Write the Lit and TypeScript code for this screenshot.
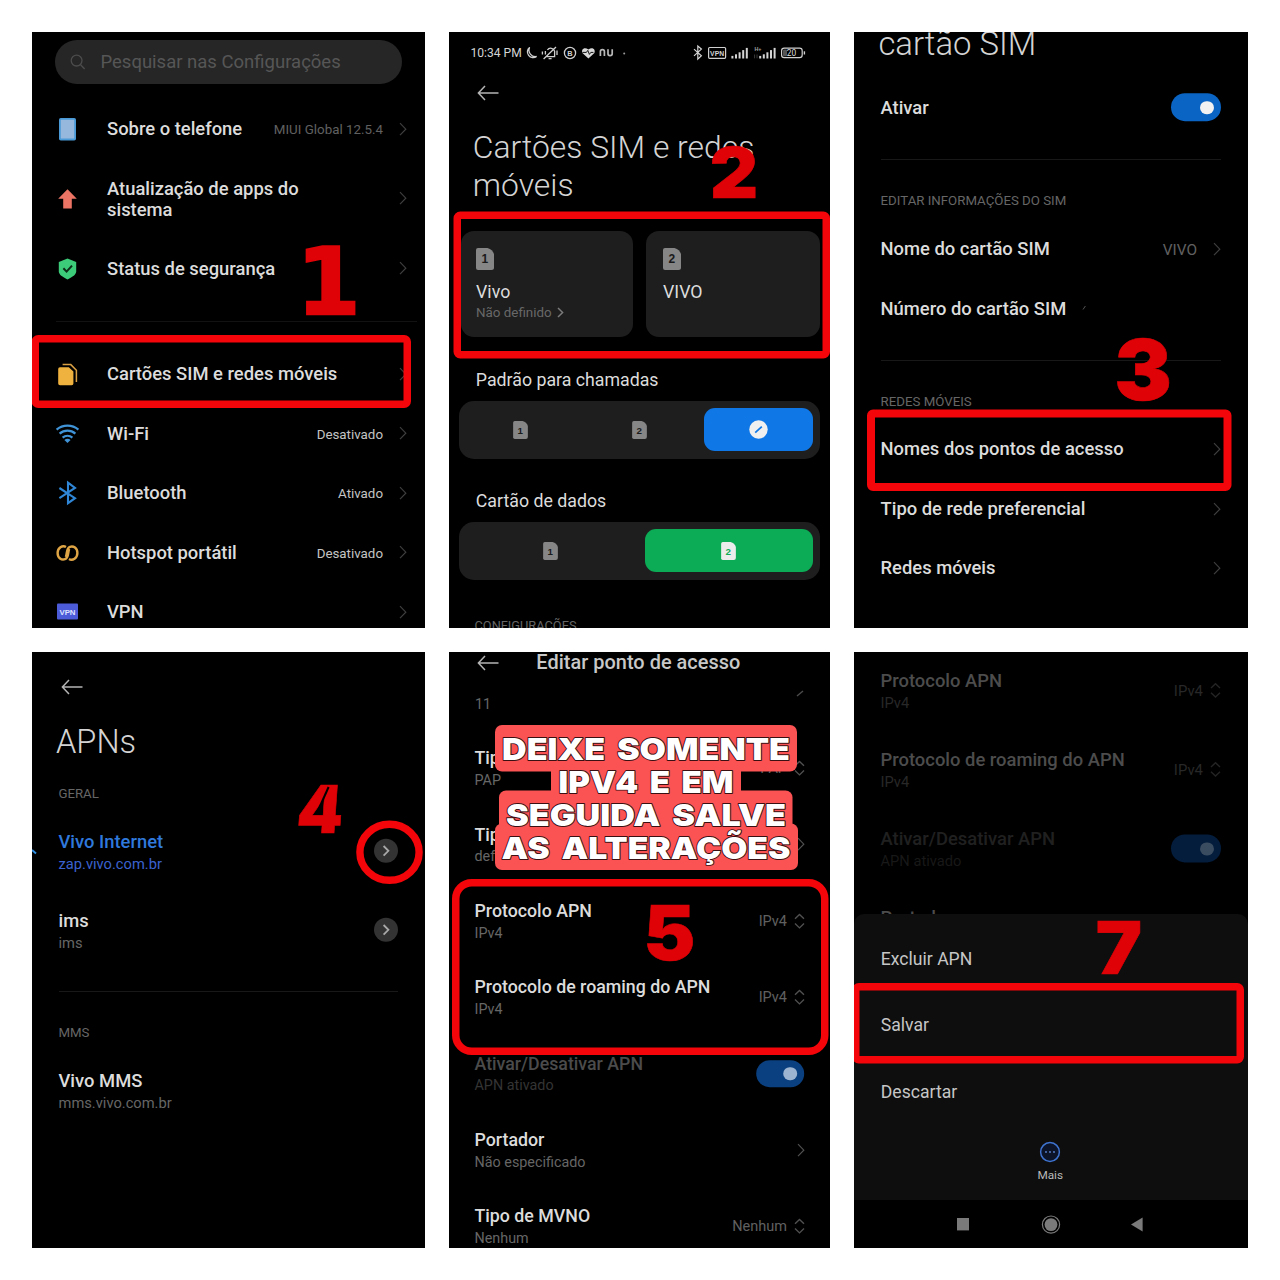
import { LitElement, html, css, svg, nothing } from "lit";
import { customElement, property } from "lit/decorators.js";
import { classMap } from "lit/directives/class-map.js";

const chevron = html`<svg class="chev" width="8" height="14" viewBox="0 0 8 14"><path d="M1 1l5.8 6L1 13" fill="none" stroke="currentColor" stroke-width="1.2"/></svg>`;
const updown = html`<svg class="chev" width="11" height="16" viewBox="0 0 11 16"><path d="M1 5.6l4.5-4.3L10 5.6M1 10.4l4.5 4.3 4.5-4.3" fill="none" stroke="currentColor" stroke-width="1.4"/></svg>`;
const back = html`<svg class="back" width="22" height="16" viewBox="0 0 22 16"><path d="M8 1L1.4 8 8 15M1.4 8H21.5" fill="none" stroke="#b4b4b4" stroke-width="1.5"/></svg>`;

const simCard = (n: number, w: number, h: number, fill: string, ink: string) => html`
  <svg width=${w} height=${h} viewBox="0 0 18 22">
    <path d="M2 0H11.5C15 1 17 3 18 6V19.5A2.5 2.5 0 0 1 15.5 22H2A2 2 0 0 1 0 20V2A2 2 0 0 1 2 0Z" fill=${fill}/>
    <text x="8.8" y="15.4" text-anchor="middle" font-family="Liberation Sans" font-weight="700" font-size="12" fill=${ink}>${n}</text>
  </svg>`;

const icons: Record<string, unknown> = {
  phone: html`<svg width="27" height="27" viewBox="0 0 27 27"><rect x="5" y="2" width="17" height="22.5" rx="1.8" fill="#4a9ad8"/><rect x="6.8" y="3.8" width="13.4" height="18.8" rx="0.6" fill="#96b8dc"/></svg>`,
  up: html`<svg width="27" height="27" viewBox="0 0 27 27"><path d="M13.5 3.2L22.8 12.8H17.8V22.6H9.2V12.8H4.2Z" fill="#ec7464"/></svg>`,
  shield: html`<svg width="27" height="27" viewBox="0 0 27 27"><path d="M13.5 2.4L22.2 6V15.2C22.2 18.6 18.6 20.8 13.5 23.4C8.4 20.8 4.8 18.6 4.8 15.2V6Z" fill="#3ccb78"/><path d="M9.4 12.2l3.2 3.4 5.4-6" fill="none" stroke="#0c2c18" stroke-width="2"/></svg>`,
  sims: html`<svg width="27" height="27" viewBox="0 0 27 27"><path d="M6 6.2H14.8L19.4 10.6V22.4A1.8 1.8 0 0 1 17.6 24.2H6A1.8 1.8 0 0 1 4.2 22.4V8A1.8 1.8 0 0 1 6 6.2Z" fill="#f0b23e"/><path d="M8.6 3.6H16.8L22.4 9.2V21" fill="none" stroke="#d9a043" stroke-width="1.5"/></svg>`,
  wifi: html`<svg width="27" height="27" viewBox="0 0 27 27"><g fill="none" stroke="#3f93d6" stroke-width="2.2"><path d="M2.6 8.6C8.8 3.2 18.2 3.2 24.4 8.6"/><path d="M5.6 12.7C10.2 8.7 16.8 8.7 21.4 12.7"/><path d="M8.6 16.6C11.4 14.1 15.6 14.1 18.4 16.6"/></g><path d="M10.4 18.9C12.2 17.4 14.8 17.4 16.6 18.9L13.5 22Z" fill="#3f93d6"/></svg>`,
  bt: html`<svg width="27" height="27" viewBox="0 0 27 27"><path d="M5.4 8L21 18.2L14 23.2V2.6L21 8L5.4 18.2" fill="none" stroke="#2f86d6" stroke-width="2.1"/></svg>`,
  hotspot: html`<svg width="27" height="27" viewBox="0 0 27 27"><g fill="none" stroke="#dfa545" stroke-width="2.4"><path d="M12 7C8.4 4.8 3.6 8 3.6 13C3.6 18 7.6 20.4 11 19.2C15 17.8 13.6 12.4 15.2 9"/><path d="M15 19C18.6 21.2 23.4 18 23.4 13C23.4 8 19.4 5.6 16 6.8C12 8.2 13.4 13.6 11.8 17"/></g></svg>`,
  vpn: html`<svg width="27" height="27" viewBox="0 0 27 27"><rect x="3" y="4.4" width="21" height="16.2" rx="1" fill="#4c5bd8"/><text x="13.5" y="15.6" text-anchor="middle" font-family="Liberation Sans" font-weight="700" font-size="7.8" fill="#dfe3ff">VPN</text></svg>`,
};

const RED = "#f40509";
const digit = (n: number, x: number, y: number, size: number, sx: number, family = "Inter", skew = 0, sw = 0.6) => svg`
  <text transform="translate(${x} ${y}) skewX(${skew}) scale(${sx} 1)" text-anchor="middle" font-family=${family}
    font-weight="900" font-size=${size} fill="#df0206" stroke="#df0206" stroke-width=${sw}>${n}</text>`;
const frame = (x: number, y: number, w: number, h: number, r = 3, sw = 7.5) => svg`
  <rect x=${x + sw / 2} y=${y + sw / 2} width=${w - sw} height=${h - sw} rx=${r} fill="none" stroke=${RED} stroke-width=${sw}/>`;
const overlay = (box: string, content: unknown) => html`<svg class="marks" viewBox=${box}>${content}</svg>`;
const caption = (t: string, x: number, y: number, w: number) => svg`
  <text x=${x} y=${y} textLength=${w} lengthAdjust="spacingAndGlyphs" font-family="Inter" font-weight="900" font-size="30.5" word-spacing="4.5"
    fill="#fff" stroke="#3a1012" stroke-width="1.8" paint-order="stroke" stroke-linejoin="round">${t}</text>`;

interface Item { title: string; sub?: string; value?: string; icon?: string; end?: "chev" | "updown" | "toggle" | "disc" | "none"; cls?: string; }

@customElement("settings-row")
export class SettingsRow extends LitElement {
  @property({ attribute: false }) item!: Item;
  static styles = css`
    :host { display: flex; align-items: center; box-sizing: border-box; height: var(--row-h, 59.5px); padding: 0 var(--pad-r, 27px) 0 var(--pad-l, 26.5px); font-family: Roboto, sans-serif; color: var(--title, #dcdcdc); white-space: nowrap; }
    svg { display: block; flex: none; }
    .icon { margin-right: 26px; }
    .text { flex: 1; min-width: 0; white-space: pre-line; transform: translateY(var(--text-y, -0.6px)); }
    .title { font-size: var(--title-size, 18.4px); font-weight: 500; line-height: var(--lh, 21.5px); }
    .sub { font-size: var(--sub-size, 14.4px); line-height: var(--lh, 21.5px); color: var(--sub, #666); }
    .end { display: flex; align-items: center; color: var(--chev, #3e3e3e); transform: translateY(var(--end-y, -0.8px)); }
    .value { position: relative; top: 0.8px; font-size: var(--value-size, 14.5px); color: var(--value, #606060); margin-right: var(--value-gap, 16px); }
    .toggle { box-sizing: border-box; display: flex; align-items: center; justify-content: flex-end; width: var(--tog-w, 50px); height: var(--tog-h, 28px); padding-right: 7.5px; border-radius: 14px; background: var(--tog, #0a64c4); transform: translateX(var(--tog-x, 0px)); }
    .knob { width: 13.4px; height: 13.4px; border-radius: 50%; background: var(--knob, #f2f2f2); }
    .disc { display: flex; align-items: center; justify-content: center; width: 24px; height: 24px; border-radius: 50%; background: #333; }
    .dim .title { color: var(--dim-title, #4b4b4b); }
    .dim .sub { color: var(--dim-sub, #343434); }
    .blue .title { color: #2f78dc; }
    .blue .sub { color: #3b62cf; }
    .bright .value { color: #c4c4c4; }
    .wrap { display: flex; align-items: center; flex: 1; }
  `;
  render() {
    const i = this.item, end = i.end ?? "chev";
    return html`<div class=${classMap({ wrap: true, [i.cls ?? "plain"]: true })}>
      ${i.icon ? html`<div class="icon">${icons[i.icon]}</div>` : nothing}
      <div class="text"><div class="title">${i.title}</div>${i.sub ? html`<div class="sub">${i.sub}</div>` : nothing}</div>
      <div class="end">
        ${i.value ? html`<span class="value">${i.value}</span>` : nothing}
        ${end === "chev" ? chevron : end === "updown" ? updown
          : end === "toggle" ? html`<div class="toggle"><div class="knob"></div></div>`
          : end === "disc" ? html`<div class="disc"><svg width="8" height="12" viewBox="0 0 8 12"><path d="M1.6 1.2L6.4 6 1.6 10.8" fill="none" stroke="#a8a8a8" stroke-width="1.8"/></svg></div>` : nothing}
      </div></div>`;
  }
}
const rows = (list: Item[]) => list.map((i) => html`<settings-row .item=${i}></settings-row>`);

@customElement("app-root")
export class AppRoot extends LitElement {
  static styles = css`
    :host { display: block; }
    .page { box-sizing: border-box; width: 1280px; height: 1280px; padding: 32px; background: #fff; display: grid; grid-template-columns: 393px 381px 394px; grid-template-rows: 596px 596px; gap: 24px; font-family: Roboto, sans-serif; color: #dcdcdc; }
    .panel { position: relative; overflow: hidden; background: #000; display: flex; flex-direction: column; white-space: nowrap; }
    .panel > * { flex: none; }
    .marks { position: absolute; inset: 0; width: 100%; height: 100%; }
    svg { display: block; }
    .rule { height: 1px; background: #181818; }
    .section { font-size: 13.25px; line-height: 20px; color: #666; }
    .title { font-weight: 300; color: #d4d4d4; }

    .p1 { --pad-l: 22px; --pad-r: 18px; --row-h: 59.5px; --value-size: 13.35px; }
    .search { box-sizing: border-box; display: flex; align-items: center; width: 347px; height: 44.5px; margin: 7.5px 0 15.9px 22.5px; padding-left: 15.5px; border-radius: 23px; background: #262626; color: #565656; font-size: 18.5px; gap: 14.5px; }
    .search span { margin-top: 1px; }
    .p1 .tall { --row-h: 80.2px; --text-y: 0px; }
    .p1 .rule { margin: 21.6px 8px 23.4px 24px; background: #121212; }

    .status { display: flex; align-items: center; height: 41px; padding: 0 24px 0 21.5px; font-size: 12.1px; color: #d4d4d4; }
    .status .grow { flex: 1; }
    .p2 .back { margin: 12px 0 0 27.5px; }
    .p2 .title { margin: 28.2px 0 0 23.8px; font-size: 31.85px; line-height: 37.6px; }
    .cards { display: grid; grid-template-columns: 172px 174px; gap: 13px; margin: 27px 0 0 12px; }
    .card { box-sizing: border-box; height: 106px; border-radius: 13px; background: #1e1e1e; padding: 17px 0 0 15px; font-size: 17.8px; }
    .card .name { margin-top: 10.6px; line-height: 22px; }
    .card .hint { display: flex; align-items: center; gap: 5px; font-size: 13.4px; line-height: 20px; color: #686868; }
    .card + .card { padding-left: 17px; }
    .label { padding-left: 26.8px; font-size: 17.75px; line-height: 24px; }
    .label.calls { margin-top: 30.2px; }
    .label.data { margin-top: 30px; }
    .seg { box-sizing: border-box; display: flex; align-items: center; width: 361px; height: 58px; margin: 9px 0 0 10px; padding: 0 2px; border-radius: 15px; background: #1e1e1e; }
    .opt { flex: 1; display: flex; align-items: center; justify-content: center; height: 43px; margin: 0 5.3px; border-radius: 11px; }
    .opt.blue { background: #0f77e6; }
    .opt.green { background: #0cab55; }
    .p2 .section { padding-left: 25.5px; margin-top: 36.3px; font-size: 12.8px; }

    .p3 { --value-size: 15.4px; }
    .p3 .title { margin: -8.6px 0 0 24.4px; font-size: 32.9px; line-height: 42px; }
    .p3 .first { margin-top: 13.1px; }
    .p3 .rule, .p4 .rule { margin: 0 27px; }
    .p3 .first + .rule { margin-top: 21.4px; }
    .p3 .second { margin-top: 20.5px; }
    .p3 .section { padding-left: 26.6px; margin: 31px 0 8.8px; }

    .p4 { --row-h: 79px; --sub-size: 14.7px; --lh: 22.2px; --pad-r: 27px; --end-y: -2.2px; --text-y: -0.2px; }
    .p4 .back { margin: 27px 0 0 28.5px; }
    .p4 .title { margin: 26.8px 0 0 24px; font-size: 32.6px; line-height: 40px; }
    .p4 .section { padding-left: 26.4px; margin: 22.5px 0 9.3px; }
    .p4 .rule { margin-top: 19.5px; }
    .p4 .rule + .section { margin-top: 31px; }

    .p5 { --row-h: 76.35px; --title-size: 17.77px; --sub-size: 14.35px; --lh: 21.75px; --pad-l: 25.5px; --pad-r: 25px; --value-gap: 7px; --end-y: -1.8px; --text-y: 0.4px; --tog: #0b4080; --knob: #9db4d0; --tog-w: 48px; --tog-h: 27px; --tog-x: -0.8px; --chev: #505050; }
    .head { display: flex; align-items: center; height: 20.6px; gap: 37.8px; padding-left: 27.5px; font-size: 18.1px; letter-spacing: 0.04px; font-weight: 500; color: #c8c8c8; }
    .head .back { margin-top: 1px; }
    .head span { font-size: 19.9px; transform-origin: left; }
    .p5 .cut { display: flex; justify-content: space-between; box-sizing: border-box; height: 59.3px; padding: 16.4px 26px 0 26px; font-size: 14.35px; line-height: 31px; color: #666; }

    .p6 { --row-h: 79.1px; --lh: 22.4px; --sub-size: 14.7px; --value-gap: 7px; --value-size: 14.9px; --title: #4c4c4c; --sub: #282828; --value: #282828; --chev: #242424; --end-y: -1.6px; --text-y: 0px; --tog: #041d3c; --knob: #3a4c60; --dim-title: #202020; --dim-sub: #181818; }
    .p6 .first { margin-top: 0.5px; }
    .sheet { position: absolute; left: 0; right: 0; bottom: 48px; box-sizing: border-box; height: 286px; padding-top: 11.9px; border-radius: 10px 10px 0 0; background: #0e0e0e; }
    .action { height: 66.4px; line-height: 66.4px; padding-left: 26.8px; font-size: 17.6px; color: #c6c6c6; }
    .more { display: flex; flex-direction: column; align-items: center; gap: 4px; margin-top: 15.6px; padding-right: 1.5px; font-size: 11.8px; line-height: 16px; color: #b8b8b8; }
    .nav { position: absolute; left: 0; right: 0; bottom: 0; height: 48px; background: #000; }
  `;

  private statusBar() {
    return html`<div class="status">
      <span>10:34 PM</span>
      <svg width="106" height="18" viewBox="0 0 106 18">
        <g fill="none" stroke="#cfcfcf" stroke-width="1.3">
          <path d="M7.6 3.4A5.6 5.6 0 1 0 14.6 12.4A6.4 6.4 0 0 1 7.6 3.4Z"/>
          <path d="M24.4 12.6H32.6V7.2A4 4 0 0 0 25.4 6M23.4 10.6V7M26.6 14.6H29.6M34 3L21.6 15M20.4 7.4V10.6M35 6.6V11"/>
          <circle cx="48" cy="9" r="5.6"/>
        </g>
        <text x="48" y="11.6" text-anchor="middle" font-family="Liberation Sans" font-weight="700" font-size="7.4" fill="#cfcfcf">B</text>
        <path d="M66.4 14.6L60.4 9C59 5.6 62 2.6 66.4 5.4C70.8 2.6 73.8 5.6 72.4 9Z" fill="#d8d8d8"/>
        <path d="M60.4 8.4H64.4L65.8 6.4L67.4 10.4L68.8 8.4H71.4" stroke="#111" stroke-width="1" fill="none"/>
        <path d="M78.4 12V7.4C78.4 6 79.2 5.6 80.4 5.6S82.4 6 82.4 7.4V12M86 5.2V9.8C86 11.4 86.8 11.7 88 11.7S90.2 11.4 90.2 9.8V5.2" stroke="#b8b8b8" stroke-width="1.7" fill="none"/>
        <circle cx="102.2" cy="9.4" r="1" fill="#9a9a9a"/>
      </svg>
      <div class="grow"></div>
      <svg width="113" height="18" viewBox="693 43.5 113 18">
        <path d="M694 48.6L701.4 55.2L697.8 58.6V45.6L701.4 48.6L694 55.4" fill="none" stroke="#d4d4d4" stroke-width="1.2"/>
        <rect x="708.6" y="47" width="17" height="10.8" rx="1" fill="none" stroke="#d0d0d0" stroke-width="1.2"/>
        <text x="717.1" y="55" text-anchor="middle" font-family="Liberation Sans" font-weight="700" font-size="6.8" fill="#d4d4d4">VPN</text>
        <g fill="#d4d4d4"><rect x="731.4" y="55.4" width="2" height="2.6"/><rect x="735" y="53.8" width="2" height="4.2"/><rect x="738.6" y="51.8" width="2" height="6.2"/><rect x="742.2" y="49.6" width="2" height="8.4"/><rect x="745.8" y="47.4" width="2" height="10.6"/>
        <rect x="759.2" y="55.4" width="2" height="2.6"/><rect x="762.8" y="53.8" width="2" height="4.2"/><rect x="766.4" y="51.8" width="2" height="6.2"/><rect x="770" y="49.6" width="2" height="8.4"/><rect x="773.6" y="47.4" width="2" height="10.6"/></g>
        <text x="754.4" y="50.6" font-family="Liberation Sans" font-weight="700" font-size="5.4" fill="#a0a0a0">H+</text>
        <path d="M754.6 57.8V54M757 57.8V54" stroke="#3c3c3c" stroke-width="1"/>
        <rect x="781.6" y="47.6" width="20.6" height="9.6" rx="2.6" fill="none" stroke="#d0d0d0" stroke-width="1.2"/>
        <path d="M804.4 50.8V54" stroke="#d0d0d0" stroke-width="1.4"/><rect x="783" y="49" width="4" height="6.8" rx="1" fill="#555"/>
        <text x="791.5" y="55.4" text-anchor="middle" font-family="Roboto" font-weight="400" font-size="8.4" fill="#dcdcdc">20</text>
      </svg>
    </div>`;
  }

  render() {
    return html`<main class="page">
      <section class="panel p1">
        <div class="search"><svg width="16" height="16" viewBox="0 0 16 16"><circle cx="6.6" cy="6.6" r="5.4" fill="none" stroke="#4c4c4c" stroke-width="1.3"/><path d="M10.6 10.8L14.6 15" stroke="#4c4c4c" stroke-width="1.3"/></svg><span>Pesquisar nas Configurações</span></div>
        ${rows([{ title: "Sobre o telefone", icon: "phone", value: "MIUI Global 12.5.4" }])}
        <settings-row class="tall" .item=${{ title: "Atualização de apps do\nsistema", icon: "up" }}></settings-row>
        ${rows([{ title: "Status de segurança", icon: "shield" }])}
        <div class="rule"></div>
        ${rows([
          { title: "Cartões SIM e redes móveis", icon: "sims" },
          { title: "Wi-Fi", icon: "wifi", value: "Desativado", cls: "bright" },
          { title: "Bluetooth", icon: "bt", value: "Ativado", cls: "bright" },
          { title: "Hotspot portátil", icon: "hotspot", value: "Desativado", cls: "bright" },
          { title: "VPN", icon: "vpn" },
        ])}
        ${overlay("32 32 393 596", svg`${digit(1, 328.6, 314, 92, 1, "DejaVu Sans", 0, 2.4)}${frame(31.5, 335, 379.5, 73)}`)}
      </section>

      <section class="panel p2">
        ${this.statusBar()}
        ${back}
        <div class="title">Cartões SIM e redes<br>móveis</div>
        <div class="cards">
          <div class="card">${simCard(1, 18, 22, "#868686", "#1a1a1a")}<div class="name">Vivo</div>
            <div class="hint">Não definido <svg width="7" height="11" viewBox="0 0 7 11"><path d="M1 1l4.6 4.5L1 10" fill="none" stroke="#7a7a7a" stroke-width="1.5"/></svg></div></div>
          <div class="card">${simCard(2, 18, 22, "#868686", "#1a1a1a")}<div class="name">VIVO</div></div>
        </div>
        <div class="label calls">Padrão para chamadas</div>
        <div class="seg">
          <div class="opt">${simCard(1, 15, 18, "#868686", "#1a1a1a")}</div>
          <div class="opt">${simCard(2, 15, 18, "#868686", "#1a1a1a")}</div>
          <div class="opt blue"><svg width="19" height="19" viewBox="0 0 19 19"><circle cx="9.5" cy="9.5" r="9.2" fill="#f0f0f0"/><path d="M6.2 12.6L12.8 6.6" stroke="#0f77e6" stroke-width="1.7"/></svg></div>
        </div>
        <div class="label data">Cartão de dados</div>
        <div class="seg">
          <div class="opt">${simCard(1, 15, 18, "#868686", "#1a1a1a")}</div>
          <div class="opt green">${simCard(2, 15, 18, "#ececec", "#0cab55")}</div>
        </div>
        <div class="section">CONFIGURAÇÕES</div>
        ${overlay("449 32 381 596", svg`${digit(2, 734, 198.3, 70, 1.07)}${frame(453.5, 211.5, 376.5, 147)}`)}
      </section>

      <section class="panel p3">
        <div class="title">cartão SIM</div>
        <settings-row class="first" .item=${{ title: "Ativar", end: "toggle" }}></settings-row>
        <div class="rule"></div>
        <div class="section">EDITAR INFORMAÇÕES DO SIM</div>
        ${rows([{ title: "Nome do cartão SIM", value: "VIVO" }, { title: "Número do cartão SIM", end: "none" }])}
        <div class="rule second"></div>
        <div class="section">REDES MÓVEIS</div>
        ${rows([{ title: "Nomes dos pontos de acesso" }, { title: "Tipo de rede preferencial" }, { title: "Redes móveis" }])}
        ${overlay("854 32 394 596", svg`<path d="M1083 309.5L1085.4 306" stroke="#555" stroke-width="1"/>
          ${digit(3, 1143, 400, 84.5, 1.02)}${frame(867, 409.5, 364.5, 81.5, 2, 8)}`)}
      </section>

      <section class="panel p4">
        ${back}
        <div class="title">APNs</div>
        <div class="section">GERAL</div>
        ${rows([{ title: "Vivo Internet", sub: "zap.vivo.com.br", end: "disc", cls: "blue" }, { title: "ims", sub: "ims", end: "disc" }])}
        <div class="rule"></div>
        <div class="section">MMS</div>
        ${rows([{ title: "Vivo MMS", sub: "mms.vivo.com.br", end: "none" }])}
        ${overlay("32 652 393 596", svg`<path d="M32 850L36 853.6" stroke="#2f8fe2" stroke-width="2"/>
          ${digit(4, 318.6, 832.5, 66, 1, "Inter", -4)}
          <path d="M317.4 812L328.6 787" stroke="#000" stroke-width="2"/>
          <ellipse cx="389.5" cy="852.3" rx="29.6" ry="28" fill="none" stroke=${RED} stroke-width="7.4"/>`)}
      </section>

      <section class="panel p5">
        <div class="head">${back}<span>Editar ponto de acesso</span></div>
        <div class="cut"><span>11</span><svg width="8" height="8" viewBox="0 0 8 8"><path d="M1 7L7 2" stroke="#4c4c4c" stroke-width="1.4"/></svg></div>
        ${rows([
          { title: "Tip", sub: "PAP", value: "PAP", end: "updown" },
          { title: "Tip", sub: "def" },
          { title: "Protocolo APN", sub: "IPv4", value: "IPv4", end: "updown" },
          { title: "Protocolo de roaming do APN", sub: "IPv4", value: "IPv4", end: "updown" },
          { title: "Ativar/Desativar APN", sub: "APN ativado", end: "toggle", cls: "dim" },
          { title: "Portador", sub: "Não especificado" },
          { title: "Tipo de MVNO", sub: "Nenhum", value: "Nenhum", end: "updown" },
        ])}
        ${overlay("449 652 381 596", svg`
          <g fill="#fb5254"><rect x="495" y="725" width="302" height="46.5" rx="7"/><rect x="551" y="768" width="190" height="26"/><rect x="499" y="790.5" width="293.5" height="48" rx="7"/><rect x="495" y="823.5" width="303" height="46.5" rx="7"/></g>
          ${caption("DEIXE SOMENTE", 502, 760.4, 288)}${caption("IPV4 E EM", 558.5, 793.2, 175)}
          ${caption("SEGUIDA SALVE", 506, 826.2, 280)}${caption("AS ALTERAÇÕES", 501.5, 859, 289)}
          ${digit(5, 669.5, 959.5, 75.5, 1.03)}${frame(452, 879, 376.5, 176, 16, 7.5)}`)}
      </section>

      <section class="panel p6">
        <div class="first"></div>
        ${rows([
          { title: "Protocolo APN", sub: "IPv4", value: "IPv4", end: "updown" },
          { title: "Protocolo de roaming do APN", sub: "IPv4", value: "IPv4", end: "updown" },
          { title: "Ativar/Desativar APN", sub: "APN ativado", end: "toggle", cls: "dim" },
          { title: "Portador", sub: "\u00a0", end: "none" },
        ])}
        <div class="sheet">
          <div class="action">Excluir APN</div><div class="action">Salvar</div><div class="action">Descartar</div>
          <div class="more"><svg width="22" height="22" viewBox="0 0 22 22"><circle cx="11" cy="11" r="9.4" fill="#0b1428" stroke="#3f73d0" stroke-width="1.5"/><g fill="#5c86d4"><circle cx="7" cy="11" r="0.9"/><circle cx="11" cy="11" r="0.9"/><circle cx="15" cy="11" r="0.9"/></g></svg><span>Mais</span></div>
        </div>
        <div class="nav"><svg width="394" height="48" viewBox="854 1200 394 48"><rect x="957" y="1218" width="12" height="12.4" fill="#7a7a7a"/><circle cx="1051" cy="1224.6" r="6.4" fill="#7a7a7a"/><circle cx="1051" cy="1224.6" r="8.6" fill="none" stroke="#7a7a7a" stroke-width="1.2"/><path d="M1131 1224.5L1142.6 1217.6V1231.4Z" fill="#7a7a7a"/></svg></div>
        ${overlay("854 652 394 596", svg`${digit(7, 1119, 973.5, 73.5, 1.06)}${frame(852, 983, 392, 80.5)}`)}
      </section>
    </main>`;
  }
}
